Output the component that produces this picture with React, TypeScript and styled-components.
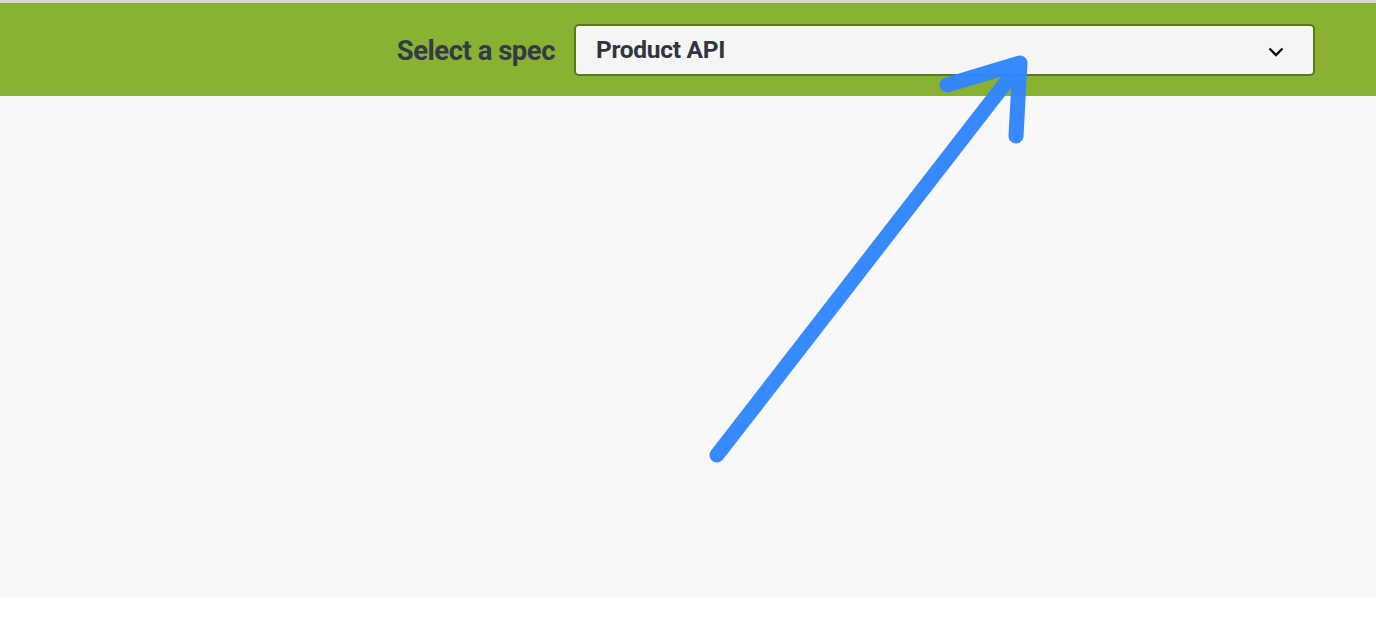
import React from "react";
import styled, { createGlobalStyle } from "styled-components";

const Global = createGlobalStyle`
  html, body { margin: 0; padding: 0; background: #ffffff; }
  body { font-family: "Roboto", "Liberation Sans", sans-serif; }
`;

const Page = styled.div`
  position: relative;
  width: 1376px;
  height: 630px;
  background: #ffffff;
  overflow: hidden;
`;

const TopEdge = styled.div`
  height: 3px;
  background: #d6d6d6;
`;

const Topbar = styled.header`
  height: 93px;
  background: #89b233;
  display: flex;
  align-items: center;
  justify-content: flex-end;
  padding-right: 61px;
  box-sizing: border-box;
`;

const Form = styled.form`
  display: flex;
  align-items: center;
  gap: 19px;
`;

const Label = styled.label`
  font-family: "Roboto", "Liberation Sans", sans-serif;
  font-weight: 700;
  font-size: 27.5px;
  letter-spacing: -0.5px;
  color: #343a46;
  margin-top: 2px;
`;

const SelectBox = styled.div`
  width: 741px;
  height: 52px;
  box-sizing: border-box;
  border: 2px solid #567a1d;
  border-radius: 5px;
  background: #f5f5f5;
  display: flex;
  align-items: center;
  justify-content: space-between;
  padding: 0 29px 0 20px;
`;

const SelectText = styled.span`
  font-family: "Roboto", "Liberation Sans", sans-serif;
  font-weight: 700;
  font-size: 24.5px;
  letter-spacing: -0.3px;
  color: #2f3541;
`;

const Chevron = styled.svg`
  width: 16px;
  height: 10px;
  margin-top: 4px;
`;

const Body = styled.main`
  height: 502px;
  background: #f8f8f8;
`;

const Overlay = styled.svg`
  position: absolute;
  left: 0;
  top: 0;
  width: 1376px;
  height: 630px;
  pointer-events: none;
`;

export default function App() {
  return (
    <>
      <Global />
      <Page>
        <TopEdge />
        <Topbar>
          <Form onSubmit={(e) => e.preventDefault()}>
            <Label>Select a spec</Label>
            <SelectBox>
              <SelectText>Product API</SelectText>
              <Chevron viewBox="0 0 16 10">
                <path d="M1.5 1.5 L8 8 L14.5 1.5" fill="none" stroke="#111" strokeWidth="2.4" />
              </Chevron>
            </SelectBox>
          </Form>
        </Topbar>
        <Body />
        <Overlay viewBox="0 0 1376 630">
          <g stroke="#3186ff" strokeWidth="15" strokeLinecap="round" strokeLinejoin="round" fill="none" opacity="0.97">
            <path d="M717 455 L1014 72" />
            <path d="M947 85 L1020 63 L1016 136" />
          </g>
        </Overlay>
      </Page>
    </>
  );
}
